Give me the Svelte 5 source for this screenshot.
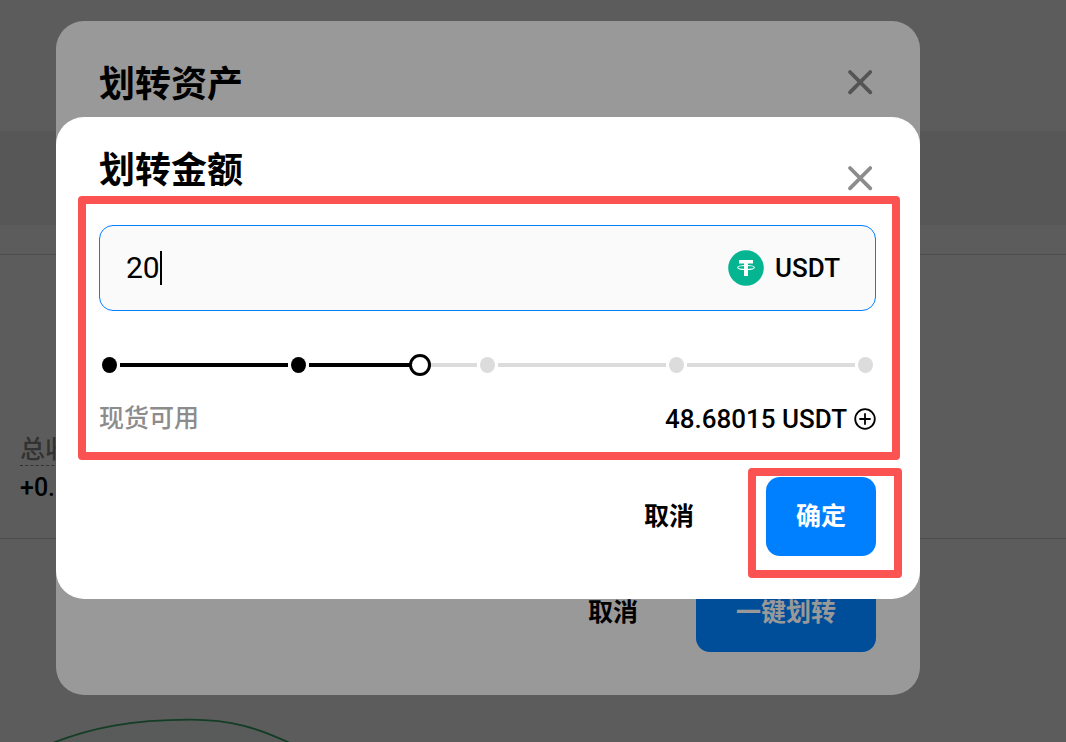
<script lang="ts">
  const available = 48.68015;
  const marks = [0, 25, 50, 75, 100];

  let amount = $state('20');

  const percent = $derived(Math.min(100, ((Number(amount) || 0) / available) * 100));

  function segmentFill(start: number) {
    // segments are a little shorter than the distance between two marks
    const part = ((percent - start) / 25) * 189 - 10;
    return Math.max(0, Math.min(100, (part / 168) * 100));
  }
</script>

{#snippet closeIcon()}
  <svg width="26" height="26" viewBox="0 0 26 26" aria-hidden="true">
    <path d="M3 3 L23.3 23.3 M23.3 3 L3 23.3" stroke="currentColor" stroke-width="3.8" stroke-linecap="round" />
  </svg>
{/snippet}

<main class="page">
  <div class="top"></div>
  <div class="band"></div>
  <div class="gap"></div>
  <section class="stats">
    <span class="stat-label">总收</span>
    <span class="stat-value">+0.</span>
  </section>
  <section class="chart">
    <svg width="340" height="26" viewBox="0 0 340 26" aria-hidden="true">
      <path
        d="M50 28 C90 12 130 3.7 190 3.7 C232 3.7 258 12 292 28"
        fill="#2ebd70"
        fill-opacity="0.05"
        stroke="#35a868"
        stroke-width="1.8"
      />
    </svg>
  </section>
</main>

<div class="mask">
  <div class="dialog" role="dialog" aria-label="划转资产">
    <header class="head">
      <h2 class="title tall">划转资产</h2>
      <button class="close" aria-label="关闭">{@render closeIcon()}</button>
    </header>
    <div class="assets"></div>
    <footer class="foot">
      <button class="btn cancel">取消</button>
      <button class="btn primary wide">一键划转</button>
    </footer>
  </div>
</div>

<div class="mask">
  <div class="dialog" role="dialog" aria-label="划转金额">
    <header class="head">
      <h2 class="title">划转金额</h2>
      <button class="close" aria-label="关闭">{@render closeIcon()}</button>
    </header>

    <div class="amount">
      <label class="field">
        <input class="field-input" type="text" aria-label="划转金额" bind:value={amount} />
        <span class="caret"></span>
        <span class="coin">
          <svg width="36" height="36" viewBox="0 0 36 36" aria-hidden="true">
            <circle cx="18" cy="18" r="17.8" fill="#05b592" />
            <path d="M11 10H25V13.4H20V26H16V13.4H11Z" fill="#fff" />
            <ellipse cx="18" cy="17.5" rx="8.3" ry="2" fill="none" stroke="#fff" stroke-width="1.1" />
          </svg>
          USDT
        </span>
      </label>

      <div class="slider">
        <div class="rail">
          {#each marks as mark, i}
            <span class="dot" class:on={mark <= percent}></span>
            {#if i < marks.length - 1}
              <span class="segment">
                <span class="fill" style="width: {segmentFill(mark)}%"></span>
              </span>
            {/if}
          {/each}
        </div>
        <input
          class="range"
          type="range"
          min="0"
          max={available}
          step="any"
          aria-label="划转比例"
          bind:value={() => Number(amount) || 0, (v) => (amount = String(v))}
        />
      </div>

      <div class="available">
        <span class="available-label">现货可用</span>
        <span class="available-value">{available} USDT</span>
        <button class="plus" aria-label="充值">
          <svg width="22" height="22" viewBox="0 0 22 22" aria-hidden="true">
            <circle cx="11" cy="11" r="9.8" fill="none" stroke="#000" stroke-width="1.8" />
            <path d="M11 6V16M6 11H16" stroke="#000" stroke-width="1.8" stroke-linecap="round" />
          </svg>
        </button>
      </div>
      <div class="highlight amount-highlight"></div>
    </div>

    <footer class="foot">
      <button class="btn cancel">取消</button>
      <div class="confirm">
        <button class="btn primary">确定</button>
        <div class="highlight confirm-highlight"></div>
      </div>
    </footer>
  </div>
</div>

<style>
  :global(body) {
    background: #fff;
    font-family: Roboto, 'Noto Sans CJK SC', sans-serif;
    color: #000;
  }

  .page {
    display: flex;
    flex-direction: column;
    height: 100vh;
    overflow: hidden;
  }

  .top { flex: none; height: 131px; }
  .band { flex: none; height: 94px; background: #f2f2f2; }
  .gap { flex: none; height: 29px; border-bottom: 1px solid #d6d6d6; }

  .stats {
    display: flex;
    flex: none;
    flex-direction: column;
    align-items: flex-start;
    gap: 7px;
    box-sizing: border-box;
    height: 284px;
    padding: 180px 20px 0;
    border-bottom: 1px solid #d6d6d6;
    font-size: 25px;
    line-height: 30px;
  }

  .stat-label { color: #8c8c8c; border-bottom: 1px dashed #8c8c8c; font-weight: 500; }
  .stat-value { font-weight: 500; }

  .chart {
    display: flex;
    flex: 1;
    align-items: flex-end;
  }

  .mask {
    position: fixed;
    inset: 0;
    display: flex;
    align-items: center;
    box-sizing: border-box;
    padding: 0 146px 26px 56px;
    background: rgba(0, 0, 0, 0.4);
  }

  .dialog {
    flex: 1;
    box-sizing: border-box;
    padding: 32px 44px 43px 43px;
    background: #fff;
    border-radius: 28px;
  }

  .head {
    display: flex;
    align-items: flex-start;
    justify-content: space-between;
  }

  .title {
    margin: 0;
    font-size: 36px;
    font-weight: 700;
    line-height: 44px;
  }

  .title.tall { line-height: 64px; }

  button {
    margin: 0;
    padding: 0;
    border: none;
    background: none;
    font-family: inherit;
    cursor: pointer;
  }

  .close {
    display: flex;
    align-items: center;
    height: 58px;
    padding: 0 3px;
    color: #8c8c8c;
  }

  .assets { height: 456px; }

  .amount {
    position: relative;
    margin: 18px 0 43px;
  }

  .field {
    display: flex;
    align-items: center;
    box-sizing: border-box;
    height: 86px;
    padding: 0 35px 0 26px;
    background: #fafafa;
    border: 1px solid #0080ff;
    border-radius: 14px;
  }

  .field-input {
    field-sizing: content;
    padding: 0;
    border: none;
    outline: none;
    background: none;
    color: #000;
    caret-color: transparent;
    font-family: inherit;
    font-size: 30px;
    line-height: 36px;
  }

  .caret { width: 2px; height: 34px; background: #000; }

  .coin {
    display: flex;
    align-items: center;
    gap: 11px;
    margin-left: auto;
    font-size: 26px;
    font-weight: 500;
  }

  .slider {
    display: grid;
    align-items: center;
    height: 22px;
    margin-top: 43px;
  }

  .rail,
  .range { grid-area: 1 / 1; }

  .rail {
    display: flex;
    align-items: center;
    gap: 3px;
    padding: 0 3px;
  }

  .dot {
    width: 15px;
    height: 16px;
    border-radius: 50%;
    background: #dcdcdc;
  }

  .dot.on { background: #000; }

  .segment {
    flex: 1;
    height: 4px;
    background: #dcdcdc;
  }

  .fill {
    display: block;
    height: 100%;
    background: #000;
  }

  .range {
    appearance: none;
    width: 100%;
    height: 22px;
    margin: 0;
    background: transparent;
  }

  .range::-webkit-slider-thumb {
    appearance: none;
    box-sizing: border-box;
    width: 22px;
    height: 22px;
    border: 3px solid #000;
    border-radius: 50%;
    background: #fff;
  }

  .available {
    display: flex;
    align-items: center;
    margin-top: 28px;
    line-height: 30px;
  }

  .available-label { margin-right: auto; font-size: 25px; font-weight: 500; color: #8c8c8c; }
  .available-value { font-size: 26px; font-weight: 500; }
  .plus { display: flex; margin-left: 7px; }

  .foot {
    display: flex;
    align-items: center;
    justify-content: flex-end;
    gap: 18px;
  }

  .btn {
    height: 79px;
    padding: 0 40px 6px;
    font-size: 25px;
    font-weight: 500;
    color: #000;
  }

  .cancel { font-weight: 700; }

  .primary {
    padding: 0 30px 6px;
    border-radius: 14px;
    background: #0080ff;
    color: #fff;
    font-weight: 700;
  }

  .primary.wide { padding: 0 40px 6px; }

  .confirm { position: relative; margin-left: 14px; }

  /* callout frames drawn over the form */
  .highlight {
    position: absolute;
    border: 8px solid #fb5252;
    border-radius: 4px;
    pointer-events: none;
  }

  .amount-highlight { inset: -29px -24px -26px -21px; }
  .confirm-highlight { inset: -9px -26px -22px -18px; }
</style>
